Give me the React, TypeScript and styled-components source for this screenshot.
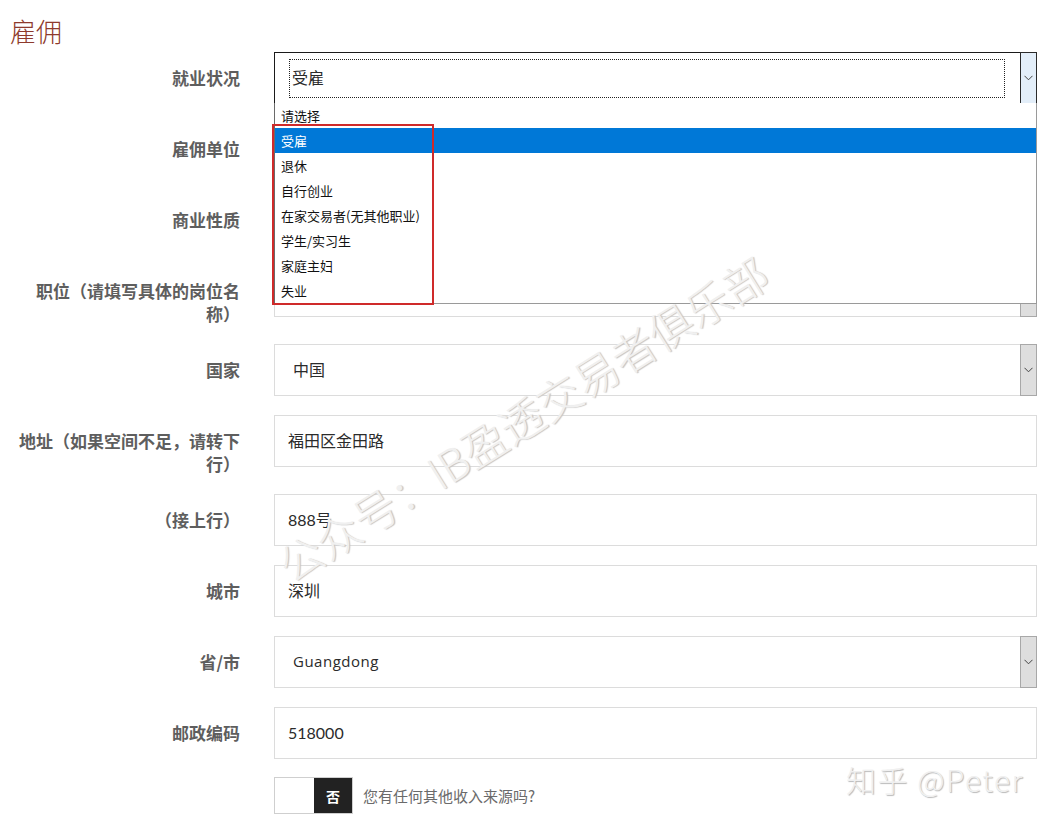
import React from "react";
import styled, { createGlobalStyle } from "styled-components";

const GlobalStyle = createGlobalStyle`
  html, body {
    margin: 0;
    padding: 0;
    background: #fff;
  }
  body {
    font-family: "Noto Sans CJK SC", "Noto Sans", sans-serif;
  }
`;

const Page = styled.div`
  position: relative;
  width: 1052px;
  height: 825px;
  overflow: hidden;
  background: #fff;
`;

const Title = styled.h2`
  margin: 14px 0 4px 10px;
  font-size: 26px;
  line-height: 34px;
  font-weight: 300;
  color: #8e3a2c;
`;

const Form = styled.div`
  display: flex;
  flex-direction: column;
  gap: 19px;
`;

const Row = styled.div`
  display: grid;
  grid-template-columns: 226px 763px;
  column-gap: 34px;
  padding-left: 14px;
  align-items: start;
`;

const Label = styled.div`
  padding-top: 14px;
  font-size: 17px;
  line-height: 23px;
  font-weight: 700;
  color: #5e5e5e;
  text-align: right;
  line-break: strict;
`;

const Field = styled.div<{ $focused?: boolean }>`
  position: relative;
  box-sizing: border-box;
  height: 52px;
  display: flex;
  align-items: center;
  border: 1px solid ${(p) => (p.$focused ? "#1a1a1a" : "#dcdcdc")};
  background: #fff;
`;

const FieldText = styled.span<{ $latin?: boolean; $pad?: number }>`
  padding-left: ${(p) => p.$pad ?? 13}px;
  padding-bottom: 2px;
  font-family: ${(p) =>
    p.$latin
      ? `"Open Sans", "Noto Sans CJK SC", sans-serif`
      : `Lato, "Noto Sans CJK SC", sans-serif`};
  font-size: ${(p) => (p.$latin ? 15 : 16)}px;
  letter-spacing: ${(p) => (p.$latin ? "0.5px" : "0")};
  color: #2b2b2b;
`;

const FocusRing = styled.div`
  position: absolute;
  left: 14px;
  top: 6px;
  right: 31px;
  bottom: 5px;
  border: 1px dotted #222;
  pointer-events: none;
`;

const ArrowBox = styled.div<{ $active?: boolean }>`
  position: absolute;
  right: -1px;
  top: -1px;
  bottom: -1px;
  width: 17px;
  box-sizing: border-box;
  display: flex;
  align-items: center;
  justify-content: center;
  background: ${(p) => (p.$active ? "#e3eef9" : "#dedede")};
  border: 1px solid ${(p) => (p.$active ? "#2a2a2a" : "#a8a8a8")};
`;

const DropList = styled.div`
  position: absolute;
  left: -1px;
  right: -1px;
  top: 50px;
  z-index: 5;
  background: #fff;
  border: 1px solid #9a9a9a;
  border-left-color: #6a6a6a;
  border-top: none;
  box-sizing: border-box;
`;

const Option = styled.div<{ $selected?: boolean }>`
  height: 25px;
  line-height: 25px;
  padding-left: 6px;
  font-size: 13px;
  color: ${(p) => (p.$selected ? "#fff" : "#111")};
  background: ${(p) => (p.$selected ? "#0078d7" : "transparent")};
`;

const Highlight = styled.div`
  position: absolute;
  left: -3px;
  top: 21px;
  width: 162px;
  height: 181px;
  box-sizing: border-box;
  border: 2px solid #cf2a2a;
  pointer-events: none;
`;

const ToggleRow = styled.div`
  display: flex;
  align-items: center;
  gap: 10px;
  margin: -1px 0 0 274px;
`;

const Toggle = styled.div`
  display: flex;
  width: 79px;
  height: 37px;
  box-sizing: border-box;
  border: 1px solid #cfcfcf;
`;

const ToggleOff = styled.div`
  flex: 1;
  background: #fff;
`;

const ToggleOn = styled.div`
  width: 38px;
  display: flex;
  align-items: center;
  justify-content: center;
  background: #222;
  color: #fff;
  font-size: 14px;
  font-weight: 700;
`;

const Question = styled.span`
  font-size: 15px;
  color: #6a6a6a;
`;

const Watermark = styled.div`
  position: absolute;
  left: 522px;
  top: 418px;
  transform: translate(-50%, -50%) rotate(-32deg);
  white-space: nowrap;
  font-size: 44px;
  font-weight: 300;
  color: #f0f0f0;
  text-shadow: 1px 1px 1px #c4c4c4;
  pointer-events: none;
  z-index: 6;
`;

const Signature = styled.div`
  position: absolute;
  left: 846px;
  top: 757px;
  white-space: nowrap;
  font-size: 30px;
  letter-spacing: 1.5px;
  font-weight: 300;
  color: #f0f0f0;
  text-shadow: 1px 1px 1px #b8b8b8;
  pointer-events: none;
`;

const Chevron = () => (
  <svg width="9" height="6" viewBox="0 0 9 6">
    <path d="M0.5 0.8 L4.5 4.8 L8.5 0.8" fill="none" stroke="#444" strokeWidth="1" />
  </svg>
);

const employmentOptions = [
  "请选择",
  "受雇",
  "退休",
  "自行创业",
  "在家交易者(无其他职业)",
  "学生/实习生",
  "家庭主妇",
  "失业",
];

type RowData = {
  label: string;
  value?: string;
  select?: boolean;
  latin?: boolean;
};

const rows: RowData[] = [
  { label: "雇佣单位" },
  { label: "商业性质", select: true },
  { label: "职位（请填写具体的岗位名称）", select: true },
  { label: "国家", value: "中国", select: true },
  { label: "地址（如果空间不足，请转下行）", value: "福田区金田路" },
  { label: "（接上行）", value: "888号" },
  { label: "城市", value: "深圳" },
  { label: "省/市", value: "Guangdong", select: true, latin: true },
  { label: "邮政编码", value: "518000" },
];

function App() {
  const [selected] = React.useState(1);

  return (
    <Page>
      <GlobalStyle />
      <Title>雇佣</Title>
      <Form>
        <Row>
          <Label>就业状况</Label>
          <Field $focused>
            <FieldText $pad={17}>{employmentOptions[selected]}</FieldText>
            <FocusRing />
            <ArrowBox $active>
              <Chevron />
            </ArrowBox>
            <DropList>
              {employmentOptions.map((o, i) => (
                <Option key={o} $selected={i === selected}>
                  {o}
                </Option>
              ))}
              <Highlight />
            </DropList>
          </Field>
        </Row>
        {rows.map((r) => (
          <Row key={r.label}>
            <Label>{r.label}</Label>
            <Field>
              {r.value && (
                <FieldText $latin={r.latin} $pad={r.select ? 18 : 13}>
                  {r.value}
                </FieldText>
              )}
              {r.select && (
                <ArrowBox>
                  <Chevron />
                </ArrowBox>
              )}
            </Field>
          </Row>
        ))}
        <ToggleRow>
          <Toggle>
            <ToggleOff />
            <ToggleOn>否</ToggleOn>
          </Toggle>
          <Question>您有任何其他收入来源吗?</Question>
        </ToggleRow>
      </Form>
      <Watermark>公众号：IB盈透交易者俱乐部</Watermark>
      <Signature>知乎 @Peter</Signature>
    </Page>
  );
}

export default App;
